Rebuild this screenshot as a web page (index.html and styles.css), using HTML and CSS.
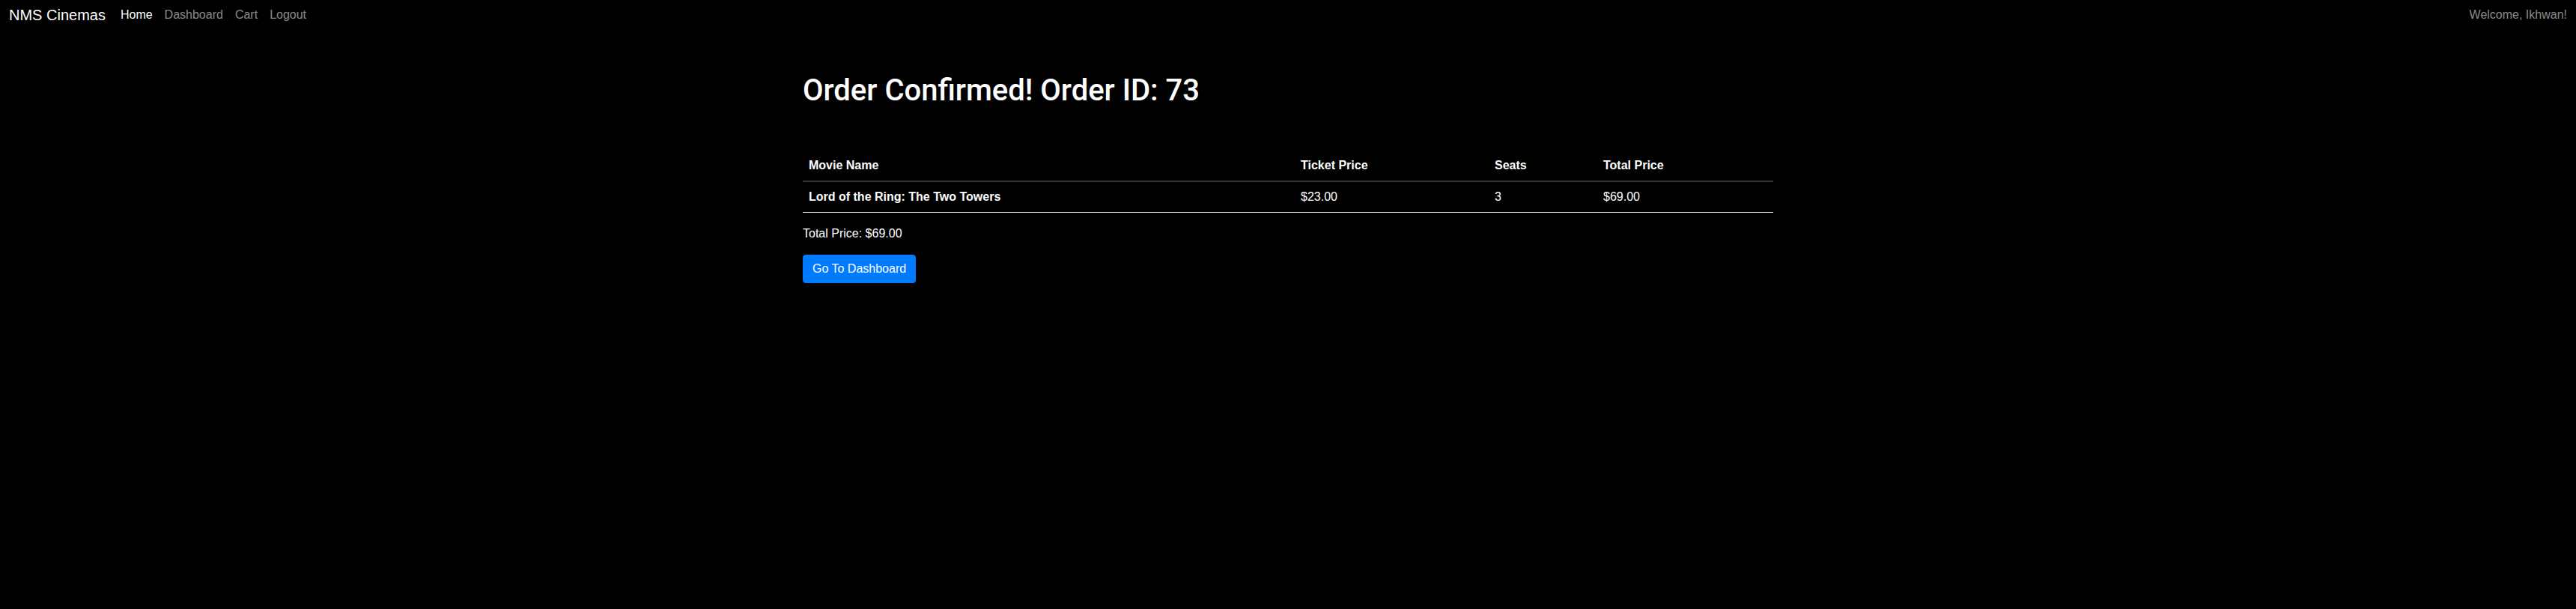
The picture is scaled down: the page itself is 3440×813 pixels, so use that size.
FILE: index.html
```html
<!DOCTYPE html>
<html lang="en">
<head>
<meta charset="utf-8">
<title>NMS Cinemas</title>
<link rel="stylesheet" href="styles.css">
</head>
<body>
<nav class="navbar">
  <div class="nav-left">
    <a class="brand" href="#">NMS Cinemas</a>
    <ul class="nav-links">
      <li><a class="nav-link active" href="#">Home</a></li>
      <li><a class="nav-link" href="#">Dashboard</a></li>
      <li><a class="nav-link" href="#">Cart</a></li>
      <li><a class="nav-link" href="#">Logout</a></li>
    </ul>
  </div>
  <span class="welcome">Welcome, Ikhwan!</span>
</nav>
<main class="container">
  <h1 class="title">Order Confirmed! Order ID: 73</h1>
  <table class="order-table">
    <thead>
      <tr>
        <th class="col-name">Movie Name</th>
        <th class="col-price">Ticket Price</th>
        <th class="col-seats">Seats</th>
        <th class="col-total">Total Price</th>
      </tr>
    </thead>
    <tbody>
      <tr>
        <th class="row-head">Lord of the Ring: The Two Towers</th>
        <td>$23.00</td>
        <td>3</td>
        <td>$69.00</td>
      </tr>
    </tbody>
  </table>
  <p class="total">Total Price: $69.00</p>
  <a class="btn" href="#">Go To Dashboard</a>
</main>
</body>
</html>
```

FILE: styles.css
```css
* { box-sizing: border-box; }
html, body {
  margin: 0;
  background: #000;
  color: #fff;
  font-family: "Liberation Sans", Arial, sans-serif;
  font-size: 16px;
  line-height: 24px;
}
.navbar {
  display: flex;
  justify-content: space-between;
  align-items: center;
  height: 40px;
  padding: 0 12px;
}
.nav-left {
  display: flex;
  align-items: center;
}
.brand {
  color: #fff;
  text-decoration: none;
  font-size: 20px;
  line-height: 30px;
  margin-right: 12px;
}
.nav-links {
  display: flex;
  list-style: none;
  margin: 0;
  padding: 0;
}
.nav-link {
  display: block;
  padding: 0 8px;
  color: rgba(255,255,255,0.55);
  text-decoration: none;
}
.nav-link.active { color: #fff; }
.welcome {
  color: rgba(255,255,255,0.55);
}
.container {
  width: 1296px;
  margin: 0 auto;
}
.title {
  font-family: Roboto, "Liberation Sans", sans-serif;
  font-size: 40px;
  line-height: 48px;
  font-weight: 500;
  margin: 57px 0 56px;
}
.order-table {
  width: 100%;
  border-collapse: collapse;
  margin-bottom: 16px;
}
.order-table th, .order-table td {
  text-align: left;
  padding: 8px;
  vertical-align: top;
}
.order-table th { font-weight: 700; }
.order-table thead th {
  border-bottom: 2px solid #2e3338;
}
.order-table tbody tr {
  border-bottom: 1px solid #dee2e6;
}
.col-name { width: 657px; }
.col-price { width: 259px; }
.col-seats { width: 145px; }
.col-total { width: 235px; }
.total {
  margin: 0 0 16px;
}
.btn {
  display: inline-block;
  padding: 6px 12px;
  border: 1px solid #007bff;
  border-radius: 4px;
  background: #007bff;
  color: #fff;
  text-decoration: none;
}
```
